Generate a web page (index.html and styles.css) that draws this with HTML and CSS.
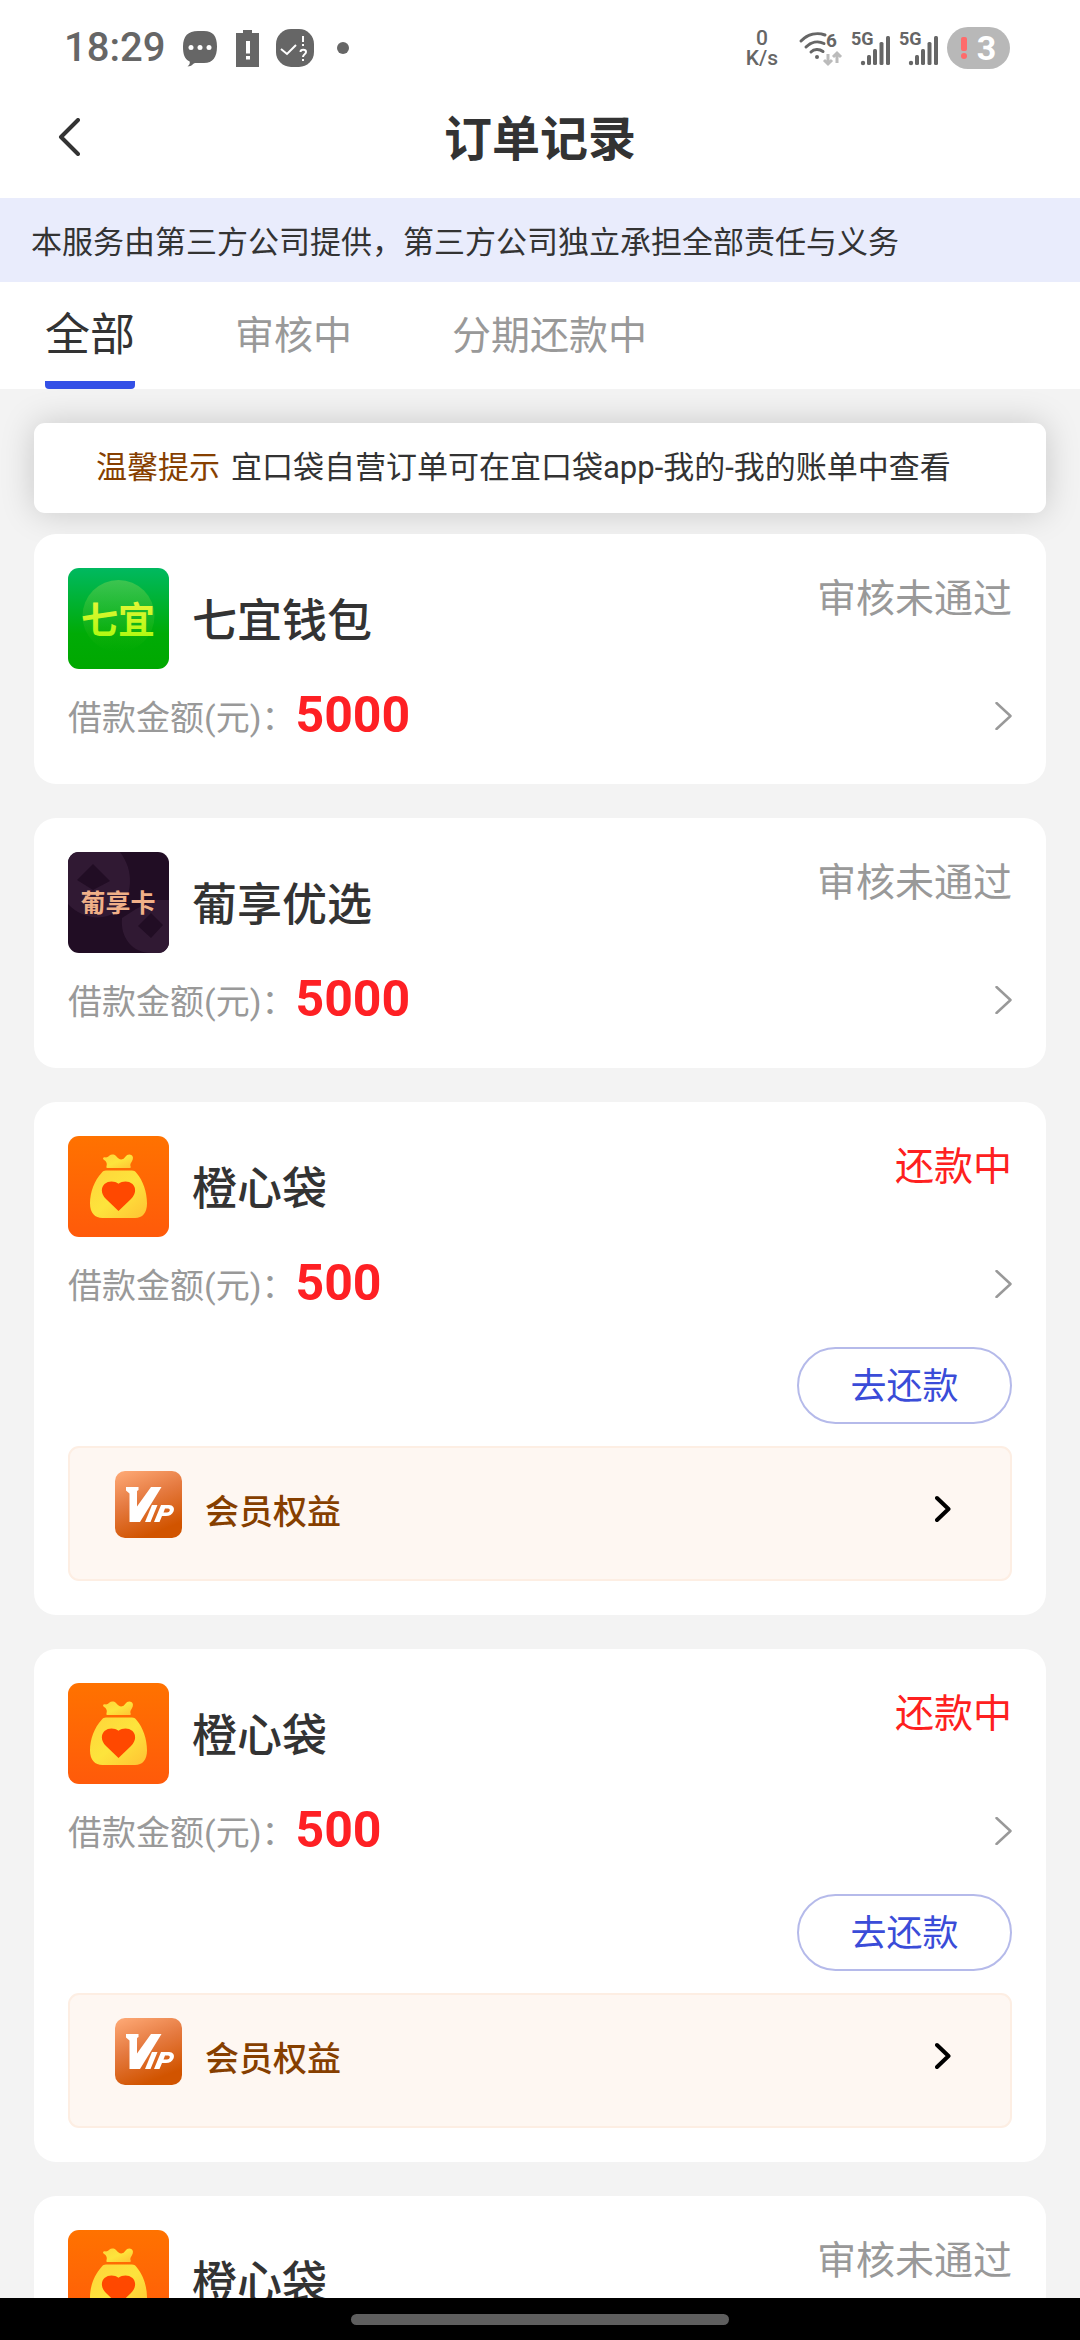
FILE: index.html
```html
<!DOCTYPE html>
<html lang="zh-CN">
<head>
<meta charset="utf-8">
<meta name="viewport" content="width=device-width, initial-scale=1">
<title>订单记录</title>
<link rel="stylesheet" href="styles.css">
</head>
<body>
<svg class="defs" aria-hidden="true">
  <defs>
    <linearGradient id="orange" x1="0" y1="0" x2="0" y2="1"><stop offset="0" stop-color="#ff7200"/><stop offset="1" stop-color="#ff5a0a"/></linearGradient>
    <linearGradient id="gold" x1="0" y1="0" x2="1" y2="1"><stop offset="0" stop-color="#ffd43a"/><stop offset=".5" stop-color="#fde43c"/><stop offset="1" stop-color="#ffc233"/></linearGradient>
    <linearGradient id="green" x1="0" y1="0" x2="0" y2="1"><stop offset="0" stop-color="#00b960"/><stop offset=".65" stop-color="#00ab06"/><stop offset="1" stop-color="#00a800"/></linearGradient>
    <linearGradient id="glow" x1="0" y1="0" x2="0" y2="1"><stop offset="0" stop-color="#4cc850" stop-opacity=".8"/><stop offset="1" stop-color="#2dbb10" stop-opacity="0"/></linearGradient>
    <linearGradient id="lime" x1="0" y1="0" x2="0" y2="1"><stop offset="0" stop-color="#f4f542"/><stop offset="1" stop-color="#a4fa08"/></linearGradient>
    <linearGradient id="copper" x1="0" y1="0" x2=".4" y2="1"><stop offset="0" stop-color="#ffab78"/><stop offset=".5" stop-color="#e57a40"/><stop offset="1" stop-color="#d15400"/></linearGradient>
  </defs>
  <symbol id="bag" viewBox="0 0 101 101">
    <rect width="101" height="101" fill="url(#orange)"/>
    <path fill="url(#gold)" d="M39.500 32c-1 0-1.300-.8-1-1.800.6-2 .3-3.700-1-5.200l-2-1.500c-1-1.300-.3-2.300 1.200-2.200 2.300.3 3-.2 4.500-1.600 2-1.800 4.800-1.700 6.800.2 2.500 2.500 4 4.500 7 3.200 2-1 3-4.800 6.500-4.600 2.800.2 4 2.300 3.300 4.700-.6 2-2.300 3.800-2.500 5.800 0 1 .4 1.200.5 2 .1.600-.5 1-1.300 1z"/>
    <path fill="url(#gold)" d="M38 34.500h26c2 0 3 .7 4.500 2.500C75 44.500 79 56 79 67.500 79 77 74.500 82 67 82H34.500C27 82 22 77 22 67.500 22 56 26.500 44.500 33.500 37c1.500-1.800 2.500-2.500 4.500-2.500z"/>
    <path fill="#ff4800" d="M50.500 75 38 63c-5.500-5.500-5-11.500-1.500-15 4.300-3.600 10.300-3 14-.2 3.700-2.800 9.700-3.400 14 .2 3.500 3.500 4 9.500-1.500 15z"/>
  </symbol>
  <symbol id="chevron" viewBox="0 0 17 28">
    <path d="M1.500 1 15.500 14 1.500 27" fill="none" stroke="#999" stroke-width="2.500" stroke-linecap="round" stroke-linejoin="round"/>
  </symbol>
  <symbol id="chevron-bold" viewBox="0 0 16 28">
    <path d="M2 3 13.500 14 2 25" fill="none" stroke="#000" stroke-width="4" stroke-linecap="round" stroke-linejoin="round"/>
  </symbol>
  <symbol id="vip" viewBox="0 0 67 67">
    <rect width="67" height="67" rx="10" fill="url(#copper)"/>
    <path fill="#fff" d="M11 16h12.500v3l-1.500 1v15.500L36 16h10.500L25 51H14.500V22.500L11 19.500z"/>
    <path fill="#fff" d="M37 34h5.500L35.500 51H30z"/>
    <path fill="#fff" fill-rule="evenodd" d="M46 34h8c4 0 6 3 4.500 6.500-1.500 3-4 4.500-7.500 4.500h-4L44.500 51H39zM50 37.500 48.500 41.500H52c3 0 4-4 1-4z"/>
  </symbol>
  <symbol id="signal" viewBox="0 0 40 36">
    <g fill="#666"><circle cx="12" cy="33" r="2.200"/><rect x="16" y="25" width="4" height="10" rx="1.500"/><rect x="22" y="19" width="4" height="16" rx="1.500"/><rect x="28.500" y="12" width="4" height="23" rx="1.500"/><rect x="35" y="6" width="4" height="29" rx="1.500"/></g>
  </symbol>
</svg>

<header class="top">
  <div class="status">
    <time class="clock">18:29</time>
    <svg class="s-chat" viewBox="0 0 36 37"><path fill="#666" d="M16 1h6c9 0 13 5 13 15.500S31 33 22 33h-9c-1.500 0-3 3.500-7.500 3.500 2-1.500 2.500-3 2.200-5C2.500 29.500 1 24 1 16.500 1 6 6 1 16 1z"/><g fill="#fff"><circle cx="9" cy="17.500" r="2.500"/><circle cx="18" cy="17.500" r="2.500"/><circle cx="27" cy="17.500" r="2.500"/></g></svg>
    <svg class="s-cell" viewBox="0 0 23 37"><path fill="#666" d="M7 0h9v3h7v34H0V3h7z"/><path fill="#fff" d="M10 11h4v12.500h-4zM10 26h4v3.500h-4z"/></svg>
    <svg class="s-app" viewBox="0 0 38 38"><rect width="38" height="38" rx="15" fill="#666"/><path d="m5 20 6 5 9-9" fill="none" stroke="#fff" stroke-width="2"/><path d="M27 7v6m0 2v2m-2.500 6c0-3 5.500-3 5.500 0 0 2.500-3 2-3 5m0 2v2" fill="none" stroke="#fff" stroke-width="2"/></svg>
    <svg class="s-dot" viewBox="0 0 12 12"><circle cx="6" cy="6" r="6" fill="#666"/></svg>
    <div class="speed"><span>0</span><span>K/s</span></div>
    <svg class="s-wifi" viewBox="0 0 46 36"><g fill="none" stroke="#666" stroke-width="3" stroke-linecap="round"><path d="M2 11C9 4 18 2 26 5M7 17c5-5 12-6.500 18-3.500M12 22c3-3 8-3.500 12-.5"/></g><circle cx="18" cy="27" r="2" fill="#666"/><text x="27" y="17" font-size="19">6</text><path d="M29 24v9m-4-3 4 4 4-4M38 33v-10m-4 4 4-4 4 4" fill="none" stroke="#bbb" stroke-width="3"/></svg>
    <svg class="s-signal" viewBox="0 0 40 36"><use href="#signal"/><text x="0" y="15" font-size="18">5G</text></svg>
    <svg class="s-signal" viewBox="0 0 40 36"><use href="#signal"/><text x="0" y="15" font-size="18">5G</text></svg>
    <div class="battery"><svg class="s-alert" viewBox="0 0 6 22"><rect width="6" height="14" rx="2" fill="#ff6b6b"/><circle cx="3" cy="19" r="3" fill="#ff6b6b"/></svg><span>3</span></div>
  </div>
  <nav class="navbar">
    <button class="back" type="button" aria-label="返回"><svg viewBox="0 0 22 38"><path d="M20 2 3 19l17 17" fill="none" stroke="#333" stroke-width="4" stroke-linecap="round" stroke-linejoin="round"/></svg></button>
    <h1>订单记录</h1>
  </nav>
</header>

<p class="notice">本服务由第三方公司提供，第三方公司独立承担全部责任与义务</p>

<div class="tabs" role="tablist">
  <button class="tab active" type="button" role="tab" aria-selected="true">全部</button>
  <button class="tab" type="button" role="tab" aria-selected="false">审核中</button>
  <button class="tab" type="button" role="tab" aria-selected="false">分期还款中</button>
</div>

<main class="content">
  <p class="tip"><strong>温馨提示</strong><span>宜口袋自营订单可在宜口袋app-我的-我的账单中查看</span></p>

  <article class="card">
    <div class="head">
      <svg class="logo" viewBox="0 0 101 101"><rect width="101" height="101" fill="url(#green)"/><circle cx="50.500" cy="48" r="36" fill="url(#glow)"/><text class="mark mark-lime" x="50" y="66">七宜</text></svg>
      <h2>七宜钱包</h2><span class="state">审核未通过</span>
    </div>
    <a class="amount" href="#"><span class="label">借款金额(元)：</span><b>5000</b><svg class="go"><use href="#chevron"/></svg></a>
  </article>

  <article class="card">
    <div class="head">
      <svg class="logo" viewBox="0 0 101 101"><rect width="101" height="101" fill="#210d24"/><path fill="#301933" fill-rule="evenodd" d="M0 0h52c14 18 14 45-4 60-13 9-34 7-48-8zM25 12 9 28l16 10 17-9z"/><path fill="#301933" fill-rule="evenodd" d="M101 48v53H83C65 101 52 86 54 66l14-9 18-9zM83 61 70 74l13 12 12-13z"/><text class="mark mark-peach" x="50" y="60">葡享卡</text></svg>
      <h2>葡享优选</h2><span class="state">审核未通过</span>
    </div>
    <a class="amount" href="#"><span class="label">借款金额(元)：</span><b>5000</b><svg class="go"><use href="#chevron"/></svg></a>
  </article>

  <article class="card">
    <div class="head">
      <svg class="logo"><use href="#bag"/></svg>
      <h2>橙心袋</h2><span class="state due">还款中</span>
    </div>
    <a class="amount" href="#"><span class="label">借款金额(元)：</span><b>500</b><svg class="go"><use href="#chevron"/></svg></a>
    <button class="repay" type="button">去还款</button>
    <a class="member" href="#"><svg class="vip"><use href="#vip"/></svg><span>会员权益</span><svg class="more"><use href="#chevron-bold"/></svg></a>
  </article>

  <article class="card">
    <div class="head">
      <svg class="logo"><use href="#bag"/></svg>
      <h2>橙心袋</h2><span class="state due">还款中</span>
    </div>
    <a class="amount" href="#"><span class="label">借款金额(元)：</span><b>500</b><svg class="go"><use href="#chevron"/></svg></a>
    <button class="repay" type="button">去还款</button>
    <a class="member" href="#"><svg class="vip"><use href="#vip"/></svg><span>会员权益</span><svg class="more"><use href="#chevron-bold"/></svg></a>
  </article>

  <article class="card">
    <div class="head">
      <svg class="logo"><use href="#bag"/></svg>
      <h2>橙心袋</h2><span class="state">审核未通过</span>
    </div>
  </article>
</main>

<footer class="gesture"><span class="handle"></span></footer>
</body>
</html>
```

FILE: styles.css
```css
* {
  box-sizing: border-box;
  margin: 0;
  padding: 0;
}

body {
  display: flex;
  flex-direction: column;
  height: 100vh;
  background: #f3f3f3;
  color: #333;
  font-family: Roboto, "Noto Sans CJK SC", sans-serif;
  font-size: 31px;
}

svg {
  display: block;
  flex: none;
}

button {
  border: 0;
  background: none;
  font: inherit;
  color: inherit;
}

a {
  color: inherit;
  text-decoration: none;
}

.defs {
  position: absolute;
  width: 0;
  height: 0;
}

/* status bar and title */
.top {
  flex: none;
  background: #fff;
}

.status {
  display: flex;
  align-items: center;
  height: 82px;
  padding: 14px 70px 0 64px;
  color: #666;
  font-weight: 500;
}

.status svg {
  overflow: visible;
}

.status text {
  fill: #666;
  font-weight: 700;
}

.clock {
  width: 118px;
  font-size: 40px;
  line-height: 42px;
}

.s-chat {
  width: 36px;
  height: 37px;
}

.s-cell {
  width: 23px;
  height: 37px;
  margin-left: 18px;
}

.s-app {
  width: 38px;
  height: 38px;
  margin-left: 17px;
}

.s-dot {
  width: 12px;
  height: 12px;
  margin-left: 23px;
}

.speed {
  display: flex;
  flex-direction: column;
  align-items: center;
  margin-left: auto;
  font-size: 21px;
  line-height: 20px;
}

.s-wifi {
  width: 46px;
  height: 36px;
  margin-left: 21px;
}

.s-signal {
  width: 40px;
  height: 36px;
  margin-left: 8px;
}

.s-wifi + .s-signal {
  margin-left: 6px;
}

.battery {
  display: flex;
  align-items: center;
  justify-content: center;
  gap: 10px;
  width: 63px;
  height: 42px;
  margin-left: 8px;
  border-radius: 21px;
  background: #b8b8b8;
  color: #fff;
  font-size: 34px;
  font-weight: 700;
  line-height: 42px;
}

.s-alert {
  width: 6px;
  height: 22px;
}

.navbar {
  display: grid;
  grid-template-columns: 100px 1fr 100px;
  align-items: center;
  height: 116px;
}

.back {
  display: flex;
  justify-content: flex-start;
  padding: 8px 0 14px 58px;
}

.back svg {
  width: 22px;
  height: 38px;
}

h1 {
  font-size: 48px;
  font-weight: 700;
  line-height: 64px;
  text-align: center;
}

.notice {
  flex: none;
  padding: 23px 31px 17px;
  background: #e9ecfc;
  line-height: 44px;
}

/* tabs */
.tabs {
  display: flex;
  flex: none;
  gap: 100px;
  height: 107px;
  padding: 0 45px;
  background: #fff;
}

.tab {
  padding-bottom: 8px;
  color: #999;
  font-size: 39px;
}

.tab.active {
  padding-bottom: 0;
  border-bottom: 8px solid transparent;
  background: linear-gradient(#3450e6, #3450e6) bottom / 100% 8px no-repeat border-box;
  border-radius: 4px;
  color: #333;
  font-size: 45px;
}

/* order list */
.content {
  flex: 1;
  min-height: 0;
  padding: 34px 34px 0;
  overflow-y: auto;
  scrollbar-width: none;
}

.tip {
  display: flex;
  gap: 11px;
  margin-bottom: 21px;
  padding: 23px 62px;
  border-radius: 11px;
  background: #fff;
  box-shadow: 0 0 34px rgba(0, 0, 0, 0.18);
  line-height: 44px;
}

.tip strong {
  color: #863f00;
  font-weight: 400;
}

.card {
  position: relative;
  margin-bottom: 34px;
  padding: 34px;
  border-radius: 22px;
  background: #fff;
}

.head {
  display: flex;
  gap: 23px;
  height: 101px;
}

.logo {
  width: 101px;
  height: 101px;
  border-radius: 11px;
}

.mark {
  font-family: "Noto Sans CJK SC", sans-serif;
  font-weight: 700;
  text-anchor: middle;
}

.mark-lime {
  fill: url(#lime);
  font-size: 37px;
}

.mark-peach {
  fill: #f0b088;
  font-size: 25px;
}

h2 {
  flex: 1;
  padding-top: 24px;
  font-size: 45px;
  font-weight: 500;
  line-height: 60px;
}

.state {
  color: #999;
  font-size: 39px;
  line-height: 62px;
}

.state.due {
  color: #fe2020;
}

.amount {
  display: flex;
  align-items: center;
  height: 69px;
  margin-top: 12px;
}

.label {
  color: #999;
  font-size: 34px;
}

.amount b {
  padding-bottom: 2px;
  color: #fe2024;
  font-size: 50px;
  line-height: 60px;
}

.go {
  width: 17px;
  height: 28px;
  margin-left: auto;
}

.repay {
  display: block;
  width: 215px;
  height: 77px;
  margin: 29px 0 22px auto;
  padding-bottom: 5px;
  border: 2px solid #b5baea;
  border-radius: 39px;
  color: #3a4cd8;
  font-size: 36px;
}

.member {
  display: flex;
  height: 135px;
  padding: 23px 59px 0 45px;
  border: 2px solid #fdeee3;
  border-radius: 11px;
  background: #fef7f2;
  color: #863f00;
  font-size: 34px;
  font-weight: 500;
  line-height: 82px;
}

.vip {
  width: 67px;
  height: 67px;
  margin-right: 23px;
}

.more {
  width: 16px;
  height: 28px;
  margin: 24px 0 0 auto;
}

/* system gesture bar */
.gesture {
  display: flex;
  flex: none;
  justify-content: center;
  height: 42px;
  padding-top: 16px;
  background: #000;
}

.handle {
  width: 35%;
  height: 11px;
  border-radius: 6px;
  background: #5e5e5e;
}
```
